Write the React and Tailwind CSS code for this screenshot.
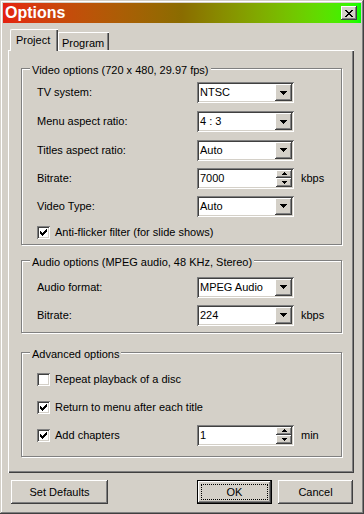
import React from "react";

const RAISED =
  "shadow-[inset_-1px_-1px_0_#404040,inset_1px_1px_0_#ffffff,inset_-2px_-2px_0_#808080,inset_2px_2px_0_#d4d0c8]";
const SUNKEN =
  "shadow-[inset_1px_1px_0_#808080,inset_-1px_-1px_0_#ffffff,inset_2px_2px_0_#404040,inset_-2px_-2px_0_#d4d0c8]";
const FRAME =
  "shadow-[inset_-1px_-1px_0_#404040,inset_1px_1px_0_#d4d0c8,inset_-2px_-2px_0_#808080,inset_2px_2px_0_#ffffff]";

function DownArrow() {
  return (
    <svg width="7" height="4" viewBox="0 0 7 4" shapeRendering="crispEdges">
      <rect x="0" y="0" width="7" height="1" fill="#000" />
      <rect x="1" y="1" width="5" height="1" fill="#000" />
      <rect x="2" y="2" width="3" height="1" fill="#000" />
      <rect x="3" y="3" width="1" height="1" fill="#000" />
    </svg>
  );
}

function SmallArrow({ up }) {
  return (
    <svg width="5" height="3" viewBox="0 0 5 3" shapeRendering="crispEdges">
      {up ? (
        <>
          <rect x="2" y="0" width="1" height="1" fill="#000" />
          <rect x="1" y="1" width="3" height="1" fill="#000" />
          <rect x="0" y="2" width="5" height="1" fill="#000" />
        </>
      ) : (
        <>
          <rect x="0" y="0" width="5" height="1" fill="#000" />
          <rect x="1" y="1" width="3" height="1" fill="#000" />
          <rect x="2" y="2" width="1" height="1" fill="#000" />
        </>
      )}
    </svg>
  );
}

function CheckMark() {
  const cols = [2, 3, 4, 3, 2, 1, 0];
  return (
    <svg width="7" height="7" viewBox="0 0 7 7" shapeRendering="crispEdges">
      {cols.map((y, x) => (
        <rect key={x} x={x} y={y} width="1" height="3" fill="#000" />
      ))}
    </svg>
  );
}

function Combo({ value }) {
  return (
    <div className={`w-[97px] h-[21px] shrink-0 bg-white p-[2px] flex ${SUNKEN}`}>
      <div className="flex-1 flex items-center pl-[1px] leading-none">{value}</div>
      <div className={`w-[17px] h-full bg-[#d4d0c8] flex items-center justify-center ${RAISED}`}>
        <DownArrow />
      </div>
    </div>
  );
}

function Spin({ value }) {
  return (
    <div className={`w-[97px] h-[21px] shrink-0 bg-white p-[2px] flex ${SUNKEN}`}>
      <div className="flex-1 flex items-center pl-[1px] leading-none">{value}</div>
      <div className="w-[16px] h-full flex flex-col">
        <div className={`flex-1 bg-[#d4d0c8] flex items-center justify-center ${RAISED}`}>
          <SmallArrow up />
        </div>
        <div className={`flex-1 bg-[#d4d0c8] flex items-center justify-center ${RAISED}`}>
          <SmallArrow />
        </div>
      </div>
    </div>
  );
}

function Check({ checked }) {
  return (
    <div className={`w-[13px] h-[13px] shrink-0 bg-white flex items-center justify-center ${SUNKEN}`}>
      {checked && <CheckMark />}
    </div>
  );
}

function Row({ label, h, children, suffix }) {
  return (
    <div className={`flex items-center ${h}`}>
      <div className="w-[160px] shrink-0">{label}</div>
      {children}
      {suffix && <span className="ml-[7px]">{suffix}</span>}
    </div>
  );
}

function CheckRow({ label, checked, h, children, suffix }) {
  return (
    <div className={`flex items-center ${h}`}>
      <div className="w-[160px] shrink-0 flex items-center gap-[5px] whitespace-nowrap">
        <Check checked={checked} />
        <span>{label}</span>
      </div>
      {children}
      {suffix && <span className="ml-[7px]">{suffix}</span>}
    </div>
  );
}

function Group({ title, className, children }) {
  return (
    <div
      className={`relative border border-[#808080] shadow-[inset_1px_1px_0_#ffffff,1px_1px_0_#ffffff] pl-[15px] ${className}`}
    >
      <span className="absolute -top-[6px] left-[8px] px-[2px] bg-[#d4d0c8] leading-[14px] whitespace-nowrap">
        {title}
      </span>
      {children}
    </div>
  );
}

function Button({ children, className, isDefault }) {
  if (isDefault) {
    return (
      <div className={`h-[24px] border border-black ${className}`}>
        <div className={`w-full h-full bg-[#d4d0c8] p-[3px] ${RAISED}`}>
          <div className="w-full h-full border border-dotted border-black flex items-center justify-center">
            {children}
          </div>
        </div>
      </div>
    );
  }
  return (
    <div className={`h-[24px] bg-[#d4d0c8] flex items-center justify-center ${RAISED} ${className}`}>
      {children}
    </div>
  );
}

export default function App() {
  return (
    <div
      className={`w-[364px] h-[514px] bg-[#d4d0c8] p-[3px] flex flex-col text-[11px] text-black font-['Liberation_Sans',Arial,sans-serif] ${FRAME}`}
    >
      {/* Title bar */}
      <div className="h-[20px] flex items-center justify-between pl-[2px] pr-[4px] bg-gradient-to-r from-[#e42010] via-[#8a6c00] to-[#00ff00]">
        <span className="text-white font-bold text-[16px] leading-none">Options</span>
        <div className={`w-[16px] h-[14px] bg-[#d4d0c8] flex items-center justify-center ${RAISED}`}>
          <svg width="8" height="7" viewBox="0 0 8 7" shapeRendering="crispEdges">
            <path d="M0 0h2v1h-2zM6 0h2v1h-2zM1 1h2v1h-2zM5 1h2v1h-2zM2 2h4v1h-4zM3 3h2v1h-2zM2 4h4v1h-4zM1 5h2v1h-2zM5 5h2v1h-2zM0 6h2v1h-2zM6 6h2v1h-2z" fill="#000" />
          </svg>
        </div>
      </div>

      {/* Tabs */}
      <div className="mt-[6px] ml-[7px] h-[21px] flex items-end">
        <div className="relative z-10 w-[48px] h-[22px] -mb-[1px] bg-[#d4d0c8] border-l border-t border-white rounded-tl-[2px] shadow-[inset_-1px_0_0_#404040,inset_-2px_0_0_#808080] pl-[5px] pt-[3px] leading-[14px]">
          Project
        </div>
        <div className="w-[51px] h-[18px] bg-[#d4d0c8] border-l border-t border-white shadow-[inset_-1px_0_0_#404040,inset_-2px_0_0_#808080] pl-[3px] pt-[3px] leading-[14px]">
          Program
        </div>
      </div>

      {/* Panel */}
      <div className="ml-[5px] w-[346px] h-[423px] border-l border-t border-white shadow-[inset_-1px_-1px_0_#404040,inset_-2px_-2px_0_#808080] pt-[17px] pl-[12px] pr-[12px] flex flex-col">
        <Group title="Video options (720 x 480, 29.97 fps)" className="h-[177px] pt-[9px]">
          <Row label="TV system:" h="h-[29px]">
            <Combo value="NTSC" />
          </Row>
          <Row label="Menu aspect ratio:" h="h-[29px]">
            <Combo value="4 : 3" />
          </Row>
          <Row label="Titles aspect ratio:" h="h-[28px]">
            <Combo value="Auto" />
          </Row>
          <Row label="Bitrate:" h="h-[28px]" suffix="kbps">
            <Spin value="7000" />
          </Row>
          <Row label="Video Type:" h="h-[28px]">
            <Combo value="Auto" />
          </Row>
          <div className="h-[24px] flex items-center gap-[5px]">
            <Check checked />
            <span>Anti-flicker filter (for slide shows)</span>
          </div>
        </Group>

        <Group title="Audio options (MPEG audio, 48 KHz, Stereo)" className="mt-[15px] h-[73px] pt-[12px]">
          <Row label="Audio format:" h="h-[28px]">
            <Combo value="MPEG Audio" />
          </Row>
          <Row label="Bitrate:" h="h-[28px]" suffix="kbps">
            <Combo value="224" />
          </Row>
        </Group>

        <Group title="Advanced options" className="mt-[19px] h-[105px] pt-[12px]">
          <CheckRow label="Repeat playback of a disc" h="h-[28px]" />
          <CheckRow label="Return to menu after each title" checked h="h-[28px]" />
          <CheckRow label="Add chapters" checked h="h-[28px]" suffix="min">
            <Spin value="1" />
          </CheckRow>
        </Group>
      </div>

      {/* Buttons */}
      <div className="mt-[7px] ml-[8px] flex">
        <Button className="w-[97px]">Set Defaults</Button>
        <Button className="w-[75px] ml-[89px]" isDefault>
          OK
        </Button>
        <Button className="w-[75px] ml-[6px]">Cancel</Button>
      </div>
    </div>
  );
}
